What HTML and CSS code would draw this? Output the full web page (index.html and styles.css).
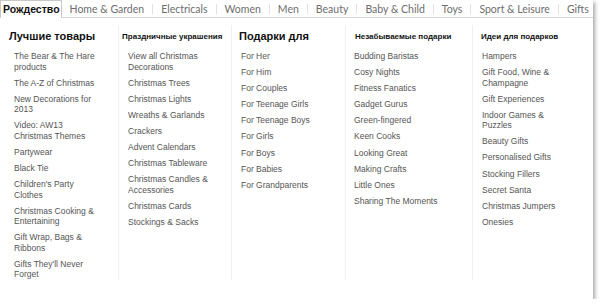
FILE: index.html
```html
<!DOCTYPE html>
<html lang="ru">
<head>
<meta charset="utf-8">
<title>Рождество</title>
<link rel="stylesheet" href="styles.css">
</head>
<body>
<div class="menu">
  <nav class="tabs">
    <a class="tab tab-active">Рождество</a>
    <a class="tab tab-first">Home &amp; Garden</a>
    <a class="tab sep">Electricals</a>
    <a class="tab sep">Women</a>
    <a class="tab sep">Men</a>
    <a class="tab sep">Beauty</a>
    <a class="tab sep">Baby &amp; Child</a>
    <a class="tab sep">Toys</a>
    <a class="tab sep">Sport &amp; Leisure</a>
    <a class="tab sep">Gifts</a>
  </nav>
  <div class="panel">
    <div class="col col-1">
      <h2 class="head head-big">Лучшие товары</h2>
      <ul class="list">
        <li>The Bear &amp; The Hare products</li>
        <li>The A-Z of Christmas</li>
        <li>New Decorations for 2013</li>
        <li>Video: AW13 Christmas Themes</li>
        <li>Partywear</li>
        <li>Black Tie</li>
        <li>Children's Party Clothes</li>
        <li>Christmas Cooking &amp; Entertaining</li>
        <li>Gift Wrap, Bags &amp; Ribbons</li>
        <li>Gifts They'll Never Forget</li>
      </ul>
    </div>
    <div class="col col-2">
      <h2 class="head head-small">Праздничные украшения</h2>
      <ul class="list">
        <li>View all Christmas Decorations</li>
        <li>Christmas Trees</li>
        <li>Christmas Lights</li>
        <li>Wreaths &amp; Garlands</li>
        <li>Crackers</li>
        <li>Advent Calendars</li>
        <li>Christmas Tableware</li>
        <li>Christmas Candles &amp; Accessories</li>
        <li>Christmas Cards</li>
        <li>Stockings &amp; Sacks</li>
      </ul>
    </div>
    <div class="col col-3">
      <h2 class="head head-big">Подарки для</h2>
      <ul class="list">
        <li>For Her</li>
        <li>For Him</li>
        <li>For Couples</li>
        <li>For Teenage Girls</li>
        <li>For Teenage Boys</li>
        <li>For Girls</li>
        <li>For Boys</li>
        <li>For Babies</li>
        <li>For Grandparents</li>
      </ul>
    </div>
    <div class="col col-4">
      <h2 class="head head-small">Незабываемые подарки</h2>
      <ul class="list">
        <li>Budding Baristas</li>
        <li>Cosy Nights</li>
        <li>Fitness Fanatics</li>
        <li>Gadget Gurus</li>
        <li>Green-fingered</li>
        <li>Keen Cooks</li>
        <li>Looking Great</li>
        <li>Making Crafts</li>
        <li>Little Ones</li>
        <li>Sharing The Moments</li>
      </ul>
    </div>
    <div class="col col-5">
      <h2 class="head head-small">Идеи для подарков</h2>
      <ul class="list">
        <li>Hampers</li>
        <li>Gift Food, Wine &amp; Champagne</li>
        <li>Gift Experiences</li>
        <li>Indoor Games &amp; Puzzles</li>
        <li>Beauty Gifts</li>
        <li>Personalised Gifts</li>
        <li>Stocking Fillers</li>
        <li>Secret Santa</li>
        <li>Christmas Jumpers</li>
        <li>Onesies</li>
      </ul>
    </div>
  </div>
</div>
</body>
</html>
```

FILE: styles.css
```css
* { box-sizing: border-box; }
html, body { margin: 0; padding: 0; background: #fff; }
body { font-family: "Liberation Sans", Arial, sans-serif; }

.menu {
  width: 593px;
  background: #fff;
  box-shadow: 2px 2px 4px rgba(0, 0, 0, 0.35);
}

.tabs {
  display: flex;
  align-items: stretch;
  height: 18px;
  border-bottom: 1px solid #d4d4d4;
}

.tab {
  position: relative;
  display: flex;
  align-items: center;
  padding: 0 8px 0 9px;
  font-family: Lato, "Liberation Sans", sans-serif;
  font-size: 10.5px;
  color: #6e6e6e;
  white-space: nowrap;
}
.tab-first { padding-left: 8px; }

.tab.sep::before {
  content: "";
  position: absolute;
  left: 0;
  top: 4px;
  height: 10px;
  border-left: 1px solid #e2e2e2;
}

.tab-active {
  height: 18px;
  padding: 0 1px 1px 2px;
  margin-bottom: -1px;
  border: 1px solid #c8c8c8;
  border-bottom: none;
  background: #fff;
  font-family: "Liberation Sans", Arial, sans-serif;
  font-weight: bold;
  font-size: 10.5px;
  color: #111;
}

.panel {
  display: grid;
  grid-template-columns: 118px 113px 114px 127px 1fr;
  padding: 7px 0 19px;
}

.col { min-height: 253px; }
.col + .col { border-left: 1px solid #efefef; }

.head {
  margin: 0;
  height: 22px;
  display: flex;
  align-items: center;
  font-weight: bold;
  color: #111;
  white-space: nowrap;
}
.head-big { font-size: 11px; }
.head-small { font-size: 8px; }

.list {
  list-style: none;
  margin: 0;
  padding: 4px 0 0;
  font-size: 8.5px;
  line-height: 10.5px;
  color: #555;
}
.list li { margin-bottom: 5.6px; }
.list li:last-child { margin-bottom: 0; }

.col-1 .head { padding-left: 9px; }
.col-1 .list { padding-left: 14px; width: 99px; }
.col-2 .head { padding-left: 3px; }
.col-2 .list { padding-left: 9px; width: 100px; }
.col-3 .head { padding-left: 7px; }
.col-3 .list { padding-left: 9px; }
.col-4 .head { padding-left: 9px; }
.col-4 .list { padding-left: 8px; }
.col-5 .head { padding-left: 8px; }
.col-5 .list { padding-left: 9px; width: 100px; }
```
